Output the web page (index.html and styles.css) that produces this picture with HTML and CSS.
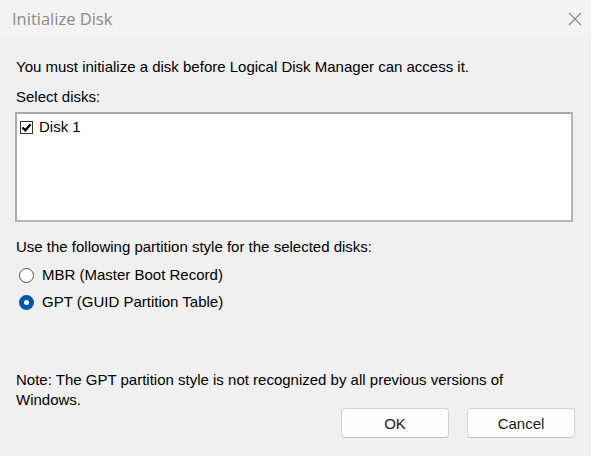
FILE: index.html
```html
<!DOCTYPE html>
<html>
<head>
<meta charset="utf-8">
<link rel="stylesheet" href="styles.css">
</head>
<body>
<div class="dialog">
  <div class="titlebar">
    <span class="title">Initialize Disk</span>
    <svg class="close" width="14" height="14" viewBox="0 0 14 14"><path d="M1 1L13 13M13 1L1 13" stroke="#8c8c8c" stroke-width="1.2" fill="none"/></svg>
  </div>
  <div class="content">
    <p class="line intro">You must initialize a disk before Logical Disk Manager can access it.</p>
    <p class="line label">Select disks:</p>
    <div class="listbox">
      <div class="item">
        <span class="check"><svg width="11" height="11" viewBox="0 0 11 11"><path d="M1.5 5.5L4.3 8.3L9.6 2.2" stroke="#000" stroke-width="2.2" fill="none"/></svg></span>
        <span>Disk 1</span>
      </div>
    </div>
    <p class="line style-label">Use the following partition style for the selected disks:</p>
    <div class="radio-row"><span class="radio"></span><span>MBR (Master Boot Record)</span></div>
    <div class="radio-row"><span class="radio on"></span><span>GPT (GUID Partition Table)</span></div>
    <p class="note">Note: The GPT partition style is not recognized by all previous versions of Windows.</p>
    <div class="buttons">
      <button class="btn">OK</button>
      <button class="btn">Cancel</button>
    </div>
  </div>
</div>
</body>
</html>
```
FILE: styles.css
```css
html, body {
  margin: 0;
  padding: 0;
  background: #f0f0f0;
}
.dialog {
  width: 591px;
  height: 456px;
  background: #f0f0f0;
  font-family: "Liberation Sans", Arial, sans-serif;
  font-size: 15px;
  color: #000;
  display: flex;
  flex-direction: column;
}
.titlebar {
  height: 38px;
  background: #f3f3f3;
  display: flex;
  align-items: center;
  justify-content: space-between;
  padding: 0 9px 0 12px;
}
.title {
  font-family: "Open Sans", "Noto Sans", sans-serif;
  font-size: 16.5px;
  color: #8a8a8a;
  margin-top: -2px;
}
.close {
  margin-top: -1px;
}
.content {
  padding: 0 16px 0 16px;
  display: flex;
  flex-direction: column;
  flex: 1;
}
.line {
  margin: 0;
  line-height: 18px;
}
.intro {
  margin-top: 20px;
}
.label {
  margin-top: 12px;
}
.listbox {
  margin-top: 6px;
  margin-left: -1px;
  width: 554px;
  height: 106px;
  background: #fff;
  border: 2px solid #a9abb0;
  border-right-color: #b4b6ba;
  border-bottom-color: #b4b6ba;
}
.item {
  display: flex;
  align-items: center;
  gap: 6px;
  padding: 4px 0 0 3px;
  line-height: 18px;
}
.check {
  width: 11px;
  height: 11px;
  border: 1px solid #333;
  display: flex;
  align-items: center;
  justify-content: center;
  background: #fff;
}
.check svg { display: block; }
.style-label {
  margin-top: 16px;
}
.radio-row {
  display: flex;
  align-items: center;
  gap: 8px;
  margin-top: 10px;
  margin-left: 3px;
  line-height: 18px;
}
.radio-row + .radio-row {
  margin-top: 9px;
}
.radio {
  width: 13px;
  height: 13px;
  border: 1px solid #555;
  border-radius: 50%;
  background: #fff;
  box-sizing: content-box;
}
.radio.on {
  width: 5px;
  height: 5px;
  border: 5px solid #0057b0;
  background: #fff;
}
.note {
  margin: 59px 0 0 0;
  line-height: 20px;
  width: 540px;
}
.buttons {
  margin-top: -2px;
  display: flex;
  justify-content: flex-end;
  gap: 18px;
}
.btn {
  width: 108px;
  height: 30px;
  background: #fdfdfd;
  border: 1px solid #d4d4d4;
  border-bottom-color: #c2c2c2;
  border-radius: 4px;
  font-family: "Liberation Sans", Arial, sans-serif;
  font-size: 15px;
  color: #1a1a1a;
  padding: 0;
}
```
